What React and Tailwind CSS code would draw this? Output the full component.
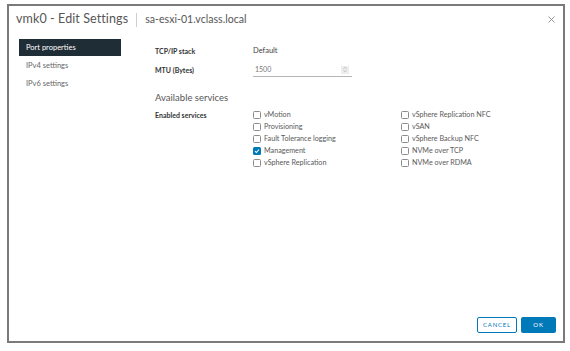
import React from "react";

const ff = { fontFamily: "Lato, 'Noto Sans', sans-serif" };

function Box({ checked }) {
  if (checked) {
    return (
      <span className="w-[8px] h-[8px] rounded-[1.5px] bg-[#0079b8] flex items-center justify-center shrink-0">
        <svg width="6" height="6" viewBox="0 0 6 6">
          <path d="M1 3.1 L2.4 4.5 L5 1.5" stroke="#fff" strokeWidth="1.1" fill="none" />
        </svg>
      </span>
    );
  }
  return <span className="w-[8px] h-[8px] rounded-[1.5px] border border-[#8c8c8c] bg-white shrink-0" />;
}

function Item({ label, checked }) {
  return (
    <div className="h-[12px] flex items-center gap-[3px]">
      <Box checked={checked} />
      <span className="text-[7.2px] text-[#5a5a5a] leading-none">{label}</span>
    </div>
  );
}

export default function App() {
  const col1 = ["vMotion", "Provisioning", "Fault Tolerance logging", "Management", "vSphere Replication"];
  const col2 = ["vSphere Replication NFC", "vSAN", "vSphere Backup NFC", "NVMe over TCP", "NVMe over RDMA"];
  return (
    <div className="w-[570px] h-[351px] bg-white overflow-hidden" style={ff}>
      <div className="ml-[7px] mt-[4px] w-[558px] h-[339px] border-2 border-[#7a7a7a] bg-white flex flex-col">
        {/* header */}
        <div className="h-[27px] flex items-center pl-[7px] pr-[8px] shrink-0">
          <span className="text-[12.5px] text-[#565656] leading-none tracking-[0.1px]">vmk0 - Edit Settings</span>
          <span className="w-px h-[14px] bg-[#cfcfcf] ml-[8px] mr-[8px]" />
          <span className="text-[10.6px] text-[#565656] leading-none">sa-esxi-01.vclass.local</span>
          <span className="ml-auto flex items-center">
            <svg width="7" height="7" viewBox="0 0 7 7">
              <path d="M0.5 0.5 L6.5 6.5 M6.5 0.5 L0.5 6.5" stroke="#8a8a8a" strokeWidth="0.9" />
            </svg>
          </span>
        </div>
        {/* body */}
        <div className="flex-1 flex mt-[6px]">
          <div className="ml-[10px] w-[102px] flex flex-col shrink-0">
            <div className="h-[17px] mb-[1px] bg-[#1f2d36] flex items-center pl-[7px] text-[7.5px] text-white leading-none">Port properties</div>
            <div className="h-[18px] flex items-center pl-[7px] text-[7.5px] text-[#666] leading-none">IPv4 settings</div>
            <div className="h-[18px] flex items-center pl-[7px] text-[7.5px] text-[#666] leading-none">IPv6 settings</div>
          </div>
          <div className="ml-[34px] flex flex-col">
            <div className="mt-[5px] h-[14px] flex items-center">
              <span className="w-[98px] text-[7px] font-bold text-[#333] leading-none">TCP/IP stack</span>
              <span className="text-[7.5px] text-[#444] leading-none">Default</span>
            </div>
            <div className="mt-[5px] h-[14px] flex items-center">
              <span className="w-[98px] text-[7px] font-bold text-[#333] leading-none">MTU (Bytes)</span>
              <div className="w-[99px] h-[14px] border-b border-[#b5b5b5] flex items-center pl-[2px] relative">
                <span className="text-[7px] text-[#777] leading-none">1500</span>
                <span className="ml-auto mr-[3px] w-[8px] h-[8px] bg-[#eeeeee] flex flex-col items-center justify-center gap-[1px]">
                  <svg width="4" height="2" viewBox="0 0 4 2"><path d="M0.5 1.8 L2 0.3 L3.5 1.8" stroke="#999" strokeWidth="0.6" fill="none" /></svg>
                  <svg width="4" height="2" viewBox="0 0 4 2"><path d="M0.5 0.2 L2 1.7 L3.5 0.2" stroke="#999" strokeWidth="0.6" fill="none" /></svg>
                </span>
              </div>
            </div>
            <div className="mt-[13px] h-[16px] flex items-center text-[9.5px] text-[#565656] leading-none">Available services</div>
            <div className="mt-[3px] flex">
              <div className="w-[98px] h-[12px] flex items-center text-[7px] font-bold text-[#333] leading-none">Enabled services</div>
              <div className="w-[148px] flex flex-col">
                {col1.map((l) => (
                  <Item key={l} label={l} checked={l === "Management"} />
                ))}
              </div>
              <div className="flex flex-col">
                {col2.map((l) => (
                  <Item key={l} label={l} />
                ))}
              </div>
            </div>
          </div>
        </div>
        {/* footer */}
        <div className="flex justify-end gap-[4px] pr-[7px] pb-[8px] shrink-0">
          <div className="w-[40px] h-[16px] border border-[#0079b8] rounded-[2px] flex items-center justify-center text-[6px] tracking-[0.8px] text-[#0079b8] leading-none">CANCEL</div>
          <div className="w-[35px] h-[16px] bg-[#0079b8] rounded-[2px] flex items-center justify-center text-[6px] tracking-[0.8px] text-white leading-none">OK</div>
        </div>
      </div>
    </div>
  );
}
